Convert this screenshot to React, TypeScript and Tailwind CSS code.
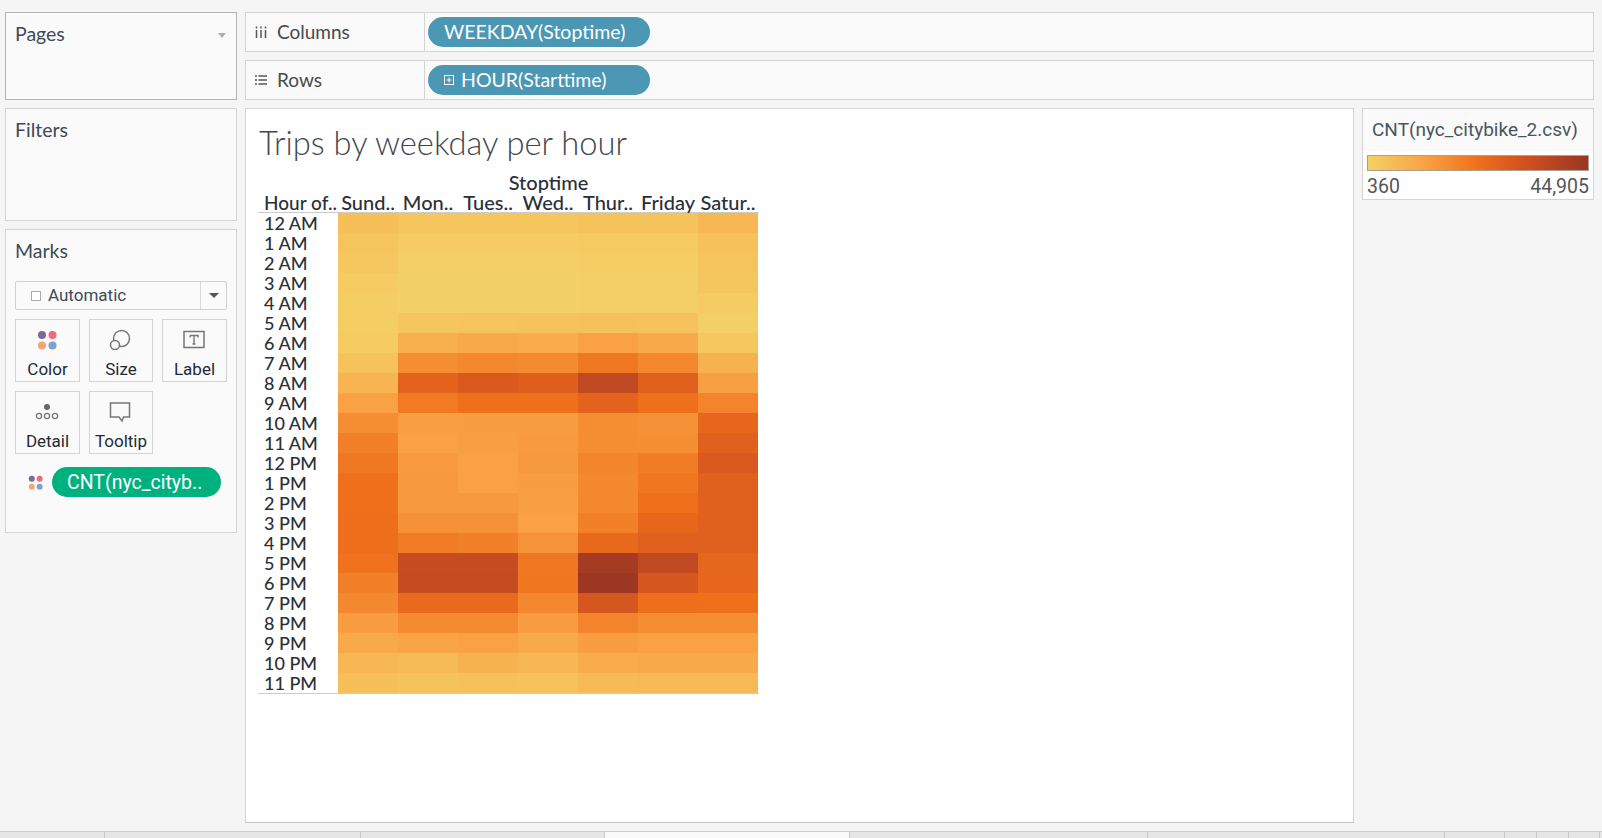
import React from "react";

const hours = ["12 AM","1 AM","2 AM","3 AM","4 AM","5 AM","6 AM","7 AM","8 AM","9 AM","10 AM","11 AM","12 PM","1 PM","2 PM","3 PM","4 PM","5 PM","6 PM","7 PM","8 PM","9 PM","10 PM","11 PM"];
const days = ["Sund..","Mon..","Tues..","Wed..","Thur..","Friday","Satur.."];
const levels = [
  [10,6,6,6,8,8,14],[7,3,3,3,4,4,9],[5,1,1,1,2,2,7],[3,0,0,0,1,1,6],[2,0,0,0,1,1,3],[2,6,7,8,9,8,1],
  [3,18,22,20,26,22,5],[8,36,38,37,46,38,17],[16,60,67,64,82,62,27],[26,45,50,50,60,50,40],[36,27,28,28,35,34,57],[42,26,27,29,36,35,62],
  [46,29,26,30,39,44,68],[50,30,26,28,38,47,62],[50,30,30,27,38,50,62],[51,34,34,26,42,57,62],[51,44,42,33,56,62,62],[49,79,79,46,95,82,58],
  [42,80,80,47,99,70,57],[38,55,55,38,70,51,50],[28,37,37,28,40,36,36],[21,24,26,21,28,26,26],[14,12,17,14,20,21,22],[10,8,9,8,12,13,13],
];
const stops: [number, number[]][] = [
  [0,[244,209,102]],[25,[249,163,69]],[50,[239,112,27]],[75,[208,80,32]],[100,[154,54,36]],
];
function ramp(v: number) {
  for (let i = 1; i < stops.length; i++) {
    if (v <= stops[i][0]) {
      const [a, ca] = stops[i - 1];
      const [b, cb] = stops[i];
      const t = (v - a) / (b - a);
      return `rgb(${ca.map((c, k) => Math.round(c + (cb[k] - c) * t)).join(",")})`;
    }
  }
  return "rgb(154,54,36)";
}

function Pill({ children, className }: { children: React.ReactNode; className: string }) {
  return <div className={`flex items-center rounded-full text-white ${className}`}>{children}</div>;
}

function Dots({ size }: { size: number }) {
  return (
    <svg width={size} height={size} viewBox="0 0 20 20">
      <circle cx="5" cy="5" r="4" fill="#7b6a94" />
      <circle cx="15.5" cy="5" r="4" fill="#f0697d" />
      <circle cx="5" cy="15.5" r="4" fill="#f4a572" />
      <circle cx="15.5" cy="15.5" r="4" fill="#7ba3cf" />
    </svg>
  );
}

function MarkButton({ label, icon }: { label: string; icon: React.ReactNode }) {
  return (
    <div className="flex h-[63px] flex-col items-center border border-[#d4d4d4] pt-[7px]">
      <div className="flex h-[26px] -translate-x-[1px] items-center justify-center">{icon}</div>
      <div className="mt-[6px] text-[17px] leading-[20px] text-[#1f2a36]">{label}</div>
    </div>
  );
}

function Shelf({ label, icon, children }: { label: string; icon: React.ReactNode; children: React.ReactNode }) {
  return (
    <div className="flex h-[40px] border border-[#d4d4d4] bg-[#fafafa]">
      <div className="flex w-[179px] items-center border-r border-[#d4d4d4] pl-[9px] text-[19px] text-[#4a4a4a]">
        <span className="flex w-[22px]">{icon}</span>
        {label}
      </div>
      <div className="flex items-center pl-[3px]">{children}</div>
    </div>
  );
}

export default function App() {
  return (
    <div className="flex h-[838px] w-[1602px] flex-col overflow-hidden bg-[#f5f5f5] font-['Lato','Liberation_Sans',sans-serif]">
      <div className="flex flex-1 gap-[8px] pl-[5px] pr-[8px] pt-[12px]">
        {/* left column */}
        <div className="flex w-[232px] shrink-0 flex-col gap-[8px]">
          <div className="relative h-[88px] border border-[#b4b4b4] bg-[#fafafa] px-[9px] pt-[6px] text-[19.500px] text-[#3d4a57]">
            Pages
            <div className="absolute right-[10px] top-[20px] h-0 w-0 border-x-[4px] border-t-[5px] border-x-transparent border-t-[#b0b0b0]" />
          </div>
          <div className="h-[113px] border border-[#d4d4d4] bg-[#fafafa] px-[9px] pt-[6px] text-[19.500px] text-[#3d4a57]">Filters</div>
          <div className="h-[304px] border border-[#d4d4d4] bg-[#fafafa] px-[9px] pt-[9px] font-['Roboto',sans-serif]">
            <div className="font-['Lato',sans-serif] text-[19.500px] leading-[24px] text-[#3d4a57]">Marks</div>
            <div className="mt-[18px] flex h-[29px] w-[212px] items-center rounded-[2px] border border-[#d0d0d0] text-[17px] text-[#3d4a57]">
              <div className="flex flex-1 items-center pl-[15px]">
                <span className="mr-[7px] h-[10px] w-[10px] border border-[#aaaaaa] bg-white" />
                Automatic
              </div>
              <div className="flex h-full w-[26px] items-center justify-center border-l border-[#d8d8d8]">
                <div className="h-0 w-0 border-x-[5px] border-t-[5px] border-x-transparent border-t-[#555555]" />
              </div>
            </div>
            <div className="mt-[9px] grid w-[212px] grid-cols-[65px_64px_65px] gap-x-[9px] gap-y-[9px]">
              <MarkButton label="Color" icon={<Dots size={20} />} />
              <MarkButton
                label="Size"
                icon={
                  <svg width="22" height="22" viewBox="0 0 22 22" fill="none" stroke="#777" strokeWidth="1.5">
                    <circle cx="12.5" cy="9.5" r="8" />
                    <circle cx="6" cy="16" r="4.5" fill="#fafafa" />
                  </svg>
                }
              />
              <MarkButton
                label="Label"
                icon={
                  <svg width="22" height="20" viewBox="0 0 22 20" fill="none">
                    <rect x="1" y="1.5" width="20" height="16" stroke="#777" strokeWidth="1.5" />
                    <path d="M7 5.5h8v2M7 5.5v2M11 5.5v8.5M9.5 14h3" stroke="#777" strokeWidth="1.4" />
                  </svg>
                }
              />
              <MarkButton
                label="Detail"
                icon={
                  <svg width="24" height="20" viewBox="0 0 24 20" fill="none" stroke="#777" strokeWidth="1.3">
                    <circle cx="12" cy="5" r="3" fill="#666" stroke="none" />
                    <circle cx="4" cy="14" r="2.6" />
                    <circle cx="12" cy="14" r="2.6" />
                    <circle cx="20" cy="14" r="2.6" />
                  </svg>
                }
              />
              <MarkButton
                label="Tooltip"
                icon={
                  <svg width="22" height="22" viewBox="0 0 22 22" fill="none" stroke="#777" strokeWidth="1.5">
                    <path d="M1.5 2h19v14h-6l-1.5 4-3-4h-8.500z" />
                  </svg>
                }
              />
            </div>
            <div className="mt-[13px] flex items-center">
              <span className="ml-[13px] mr-[9px] flex">
                <Dots size={15} />
              </span>
              <Pill className="h-[30px] w-[169px] bg-[#00b180] pl-[15px] pt-[1px] text-[19.500px]">CNT(nyc_cityb..</Pill>
            </div>
          </div>
        </div>

        {/* right column */}
        <div className="flex flex-1 flex-col gap-[8px]">
          <Shelf
            label="Columns"
            icon={
              <svg width="12" height="12" viewBox="0 0 12 12" stroke="#555" strokeWidth="1.5">
                <path d="M1.500 4v8M6 4v8M10.500 4v8M1.500 0.500v2M6 0.500v2M10.500 0.500v2" />
              </svg>
            }
          >
            <Pill className="h-[30px] w-[222px] bg-[#4b97b4] pl-[16px] text-[19.500px]">WEEKDAY(Stoptime)</Pill>
          </Shelf>
          <Shelf
            label="Rows"
            icon={
              <svg width="12" height="12" viewBox="0 0 12 12" stroke="#555" strokeWidth="1.5">
                <path d="M0 2h2M0 6h2M0 10h2M3.500 2h8.500M3.500 6h8.500M3.500 10h8.500" />
              </svg>
            }
          >
            <Pill className="h-[30px] w-[222px] bg-[#4b97b4] pl-[16px] text-[19.500px]">
              <svg width="10" height="10" viewBox="0 0 10 10" className="mr-[7px]" fill="none" stroke="#fff">
                <rect x="0.500" y="0.500" width="9" height="9" />
                <path d="M2.500 5h5M5 2.500v5" />
              </svg>
              HOUR(Starttime)
            </Pill>
          </Shelf>
          <div className="flex h-[715px] gap-[8px]">
            <div className="w-[1109px] border border-[#d4d4d4] border-b-[#c4c4c4] bg-white pl-[12px] pt-[16px]">
              <div className="pl-[1px] text-[32.700px] font-light leading-[36px] text-[#3f4750]">Trips by weekday per hour</div>
              <div className="mt-[12px] w-[501px] text-[18px] font-medium leading-[20px] text-[#2b3038]">
                <div className="ml-[80px] text-center text-[20px] leading-[19px]">Stoptime</div>
                <div className="flex h-[21px] border-b border-[#cccccc] text-[20px] leading-[21px]">
                  <div className="w-[80px] whitespace-nowrap pl-[6px] text-[19px]">Hour of..</div>
                  {days.map((d) => (
                    <div key={d} className="w-[60px] whitespace-nowrap text-center">{d}</div>
                  ))}
                </div>
                <div className="border-b border-[#cccccc]">
                  {hours.map((h, i) => (
                    <div key={h} className="flex h-[20px]">
                      <div className="w-[80px] pl-[6px]">{h}</div>
                      {levels[i].map((v, j) => (
                        <div key={j} className="h-[20px] w-[60px]" style={{ backgroundColor: ramp(v) }} />
                      ))}
                    </div>
                  ))}
                </div>
              </div>
            </div>
            <div className="h-[92px] flex-1 border border-[#d4d4d4] bg-white font-['Roboto',sans-serif] text-[#555555]">
              <div className="h-[42px] bg-[#fafafa] pl-[9px] pt-[9px] text-[19px] leading-[24px] text-[#4a5560]">CNT(nyc_citybike_2.csv)</div>
              <div className="mx-[4px] mt-[4px] h-[16px] border border-[#a9a090] bg-[linear-gradient(to_right,#f4d166,#f9a345_25%,#ef701b_50%,#d0501f_72%,#9a3624)]" />
              <div className="mx-[4px] mt-[4px] flex justify-between text-[19.500px] leading-[24px]">
                <span>360</span>
                <span>44,905</span>
              </div>
            </div>
          </div>
        </div>
      </div>

      {/* bottom tab strip */}
      <div className="flex h-[7px] border-t border-[#cccccc] bg-[#e6e6e6]">
        <div className="w-[105px] border-r border-[#c8c8c8]" />
        <div className="w-[256px] border-r border-[#c8c8c8]" />
        <div className="w-[244px] border-r border-[#c8c8c8]" />
        <div className="w-[245px] border-r border-[#c8c8c8] bg-[#fafafa]" />
        <div className="w-[298px] border-r border-[#c8c8c8]" />
        <div className="w-[297px] border-r border-[#c8c8c8]" />
        <div className="w-[60px] border-r border-[#c8c8c8]" />
        <div className="w-[32px] border-r border-[#c8c8c8]" />
        <div className="w-[32px] border-r border-[#c8c8c8]" />
        <div className="w-[31px] border-r border-[#c8c8c8]" />
      </div>
    </div>
  );
}
